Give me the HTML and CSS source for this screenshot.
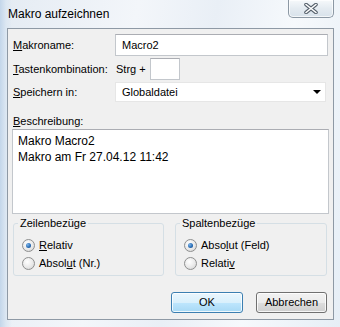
FILE: index.html
```html
<!DOCTYPE html>
<html lang="de">

<head>
    <meta charset="UTF-8">
    <title>Makro aufzeichnen</title>
    <link rel="stylesheet" href="styles.css">
</head>

<body>

    <div class="window">
        <div class="titlebar">
            <span class="title">Makro aufzeichnen</span>
            <div class="close-btn">
                <svg width="14" height="11" viewBox="0 0 14 11">
                    <path d="M2 1.5 L12 9.5 M12 1.5 L2 9.5" stroke="#55606b" stroke-width="3.6" stroke-linecap="round" fill="none" />
                    <path d="M2 1.5 L12 9.5 M12 1.5 L2 9.5" stroke="#ffffff" stroke-width="1.6" stroke-linecap="round" fill="none" />
                </svg>
            </div>
        </div>

        <div class="client">
            <div class="form-row row-name">
                <span class="lbl"><u>M</u>akroname:</span>
                <div class="textbox wide">Macro2</div>
            </div>
            <div class="form-row row-key">
                <span class="lbl"><u>T</u>astenkombination:</span>
                <div class="key-cell">
                    <span class="strg">Strg +</span>
                    <div class="textbox small"></div>
                </div>
            </div>
            <div class="form-row row-save">
                <span class="lbl"><u>S</u>peichern in:</span>
                <div class="combo">
                    <span>Globaldatei</span>
                    <span class="arrow"></span>
                </div>
            </div>

            <div class="desc-lbl"><u>B</u>eschreibung:</div>
            <div class="textarea">
                <div>Makro Macro2</div>
                <div>Makro am Fr 27.04.12 11:42</div>
            </div>

            <div class="groups">
                <fieldset class="group left">
                    <legend>Zeilenbezüge</legend>
                    <div class="radio-row"><span class="radio checked"></span><span><u>R</u>elativ</span></div>
                    <div class="radio-row"><span class="radio"></span><span>Absol<u>u</u>t (Nr.)</span></div>
                </fieldset>
                <fieldset class="group right">
                    <legend>Spaltenbezüge</legend>
                    <div class="radio-row"><span class="radio checked"></span><span>Abso<u>l</u>ut (Feld)</span></div>
                    <div class="radio-row"><span class="radio"></span><span>Relati<u>v</u></span></div>
                </fieldset>
            </div>

            <div class="buttons">
                <div class="btn default">OK</div>
                <div class="btn">Abbrechen</div>
            </div>
        </div>
    </div>

</body>

</html>
```

FILE: styles.css
```css
body {
    margin: 0;
    font-family: 'Liberation Sans', Arial, sans-serif;
    font-size: 11px;
    color: #000;
    background: #eef3f8;
}

.window {
    width: 340px;
    height: 327px;
    background:
        linear-gradient(90deg, #c3d6ea 0px, #dce7f2 6px, rgba(255, 255, 255, 0) 12px),
        linear-gradient(100deg, #e4ebf3 0%, #f3f6fa 35%, #e9eff6 55%, #f6f9fc 75%, #e6eef6 100%);
}

.titlebar {
    height: 28px;
    display: flex;
    align-items: flex-start;
    padding-right: 6px;
}

.title {
    padding: 6px 0 0 8px;
    font-size: 12px;
    line-height: 16px;
    color: #000;
}

.close-btn {
    margin-left: auto;
    width: 44px;
    height: 17px;
    border: 1px solid #8c98a4;
    border-top: none;
    border-radius: 0 0 5px 5px;
    background: linear-gradient(#f6f9fb, #e4ebf1 50%, #d8e2eb);
    display: flex;
    align-items: center;
    justify-content: center;
    box-shadow: inset 0 0 0 1px rgba(255, 255, 255, 0.7);
}

.client {
    margin: 0 6px 0 7px;
    height: 285px;
    border: 1px solid #8e99a5;
    background: #f0f0f0;
    padding: 5px 4px 0 5px;
    box-sizing: content-box;
    width: 316px;
}

.form-row {
    display: grid;
    grid-template-columns: 102px 1fr;
    align-items: center;
}

.row-name {
    height: 22px;
}

.row-key {
    height: 22px;
    margin-top: 2px;
}

.row-save {
    height: 20px;
    margin-top: 2px;
}

.lbl {
    line-height: 15px;
}

.textbox {
    box-sizing: border-box;
    height: 22px;
    background: #fff;
    border: 1px solid #c3c7cc;
    border-top-color: #abadb3;
    padding: 0 0 0 6px;
    line-height: 20px;
}

.textbox.wide {
    width: 213px;
}

.key-cell {
    display: flex;
    align-items: center;
}

.strg {
    padding-left: 1px;
    width: 34px;
}

.textbox.small {
    width: 30px;
}

.combo {
    box-sizing: border-box;
    width: 211px;
    height: 20px;
    background: #fff;
    border: 1px solid #e6e6e6;
    display: flex;
    align-items: center;
    justify-content: space-between;
    padding: 0 4px 0 6px;
}

.arrow {
    width: 0;
    height: 0;
    border-left: 4px solid transparent;
    border-right: 4px solid transparent;
    border-top: 4px solid #000;
}

.desc-lbl {
    margin-top: 12px;
    height: 15px;
    line-height: 15px;
}

.textarea {
    box-sizing: border-box;
    margin-left: -1px;
    width: 317px;
    height: 85px;
    background: #fff;
    border: 1px solid #c3c7cc;
    border-top-color: #abadb3;
    padding: 3px 0 0 5px;
    line-height: 16px;
    font-size: 12px;
}

.groups {
    display: flex;
    gap: 11px;
    margin-top: 2px;
}

.group {
    margin: 0;
    padding: 6px 0 2px 8px;
    border: 1px solid #d5dfe5;
    border-radius: 3px;
    box-sizing: border-box;
    height: 60px;
}

.group.left {
    width: 151px;
}

.group.right {
    width: 152px;
}

.group legend {
    padding: 0 2px;
    margin-left: -4px;
    line-height: 14px;
}

.radio-row {
    display: flex;
    align-items: center;
    height: 18px;
    gap: 4px;
}

.radio {
    box-sizing: border-box;
    width: 13px;
    height: 13px;
    border-radius: 50%;
    border: 1px solid #8e8f8f;
    background: radial-gradient(circle at 40% 35%, #ffffff 0%, #e9e9e9 55%, #cfcfcf 100%);
    display: flex;
    align-items: center;
    justify-content: center;
}

.radio.checked::after {
    content: "";
    width: 5px;
    height: 5px;
    border-radius: 50%;
    background: radial-gradient(circle at 35% 35%, #7fb5e8 0%, #2a6fb8 55%, #103f7a 100%);
}

.buttons {
    display: flex;
    justify-content: flex-end;
    gap: 13px;
    margin-top: 16px;
    padding-right: 2px;
}

.btn {
    box-sizing: border-box;
    height: 21px;
    width: 71px;
    border: 1px solid #707070;
    border-radius: 3px;
    background: linear-gradient(#f2f2f2 0%, #ebebeb 50%, #dddddd 51%, #cfcfcf 100%);
    text-align: center;
    line-height: 19px;
    box-shadow: inset 0 0 0 1px rgba(255, 255, 255, 0.8);
}

.btn.default {
    width: 72px;
    border-color: #3c7fb1;
    background: linear-gradient(#eaf6fd 0%, #d9f0fc 50%, #bee6fd 51%, #a7d9f5 100%);
}
```
